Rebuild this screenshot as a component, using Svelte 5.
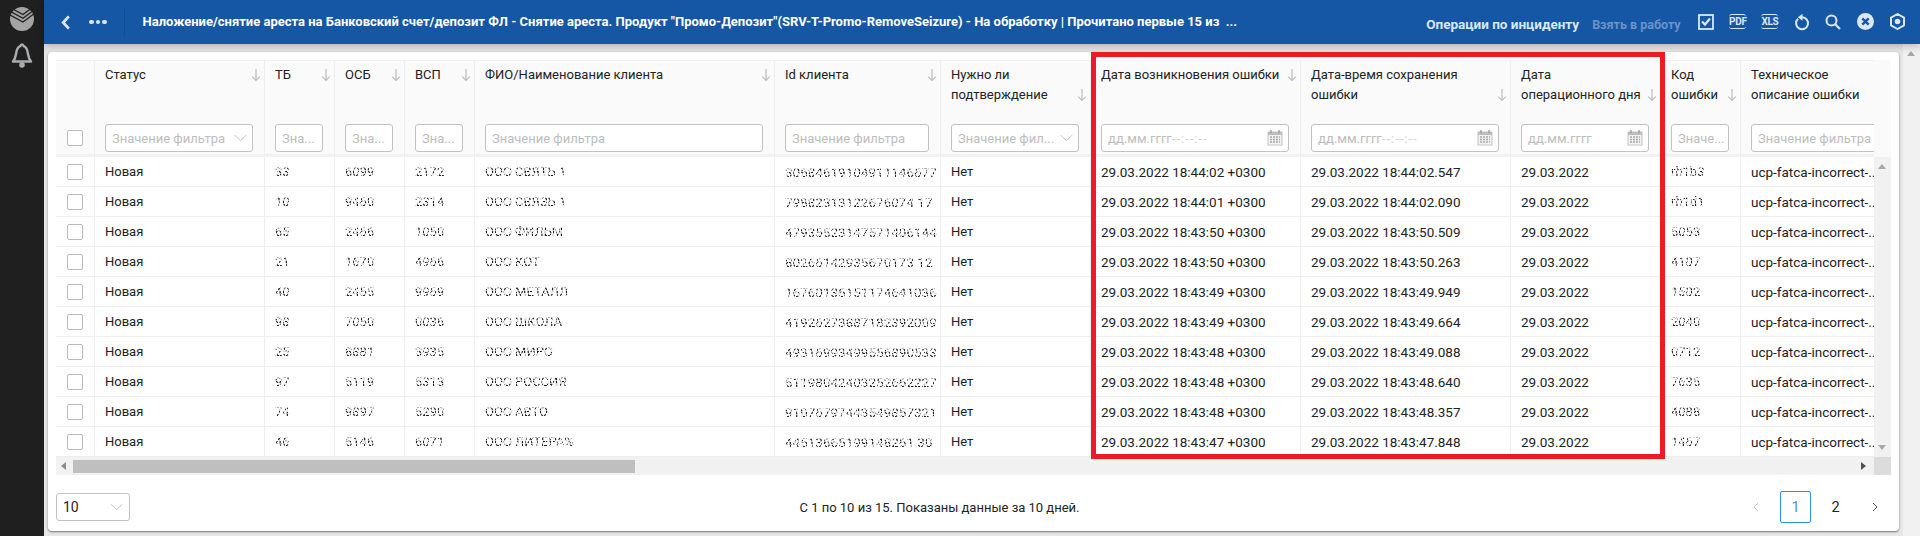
<script>
    const columns = [
        { lines: ['Статус'], width: 170, filter: 'select', text: 'Значение фильтра' },
        { lines: ['ТБ'], width: 70, filter: 'text', text: 'Зна...' },
        { lines: ['ОСБ'], width: 70, filter: 'text', text: 'Зна...' },
        { lines: ['ВСП'], width: 70, filter: 'text', text: 'Зна...' },
        { lines: ['ФИО/Наименование клиента'], width: 300, filter: 'text', text: 'Значение фильтра' },
        { lines: ['Id клиента'], width: 166, filter: 'text', text: 'Значение фильтра' },
        { lines: ['Нужно ли', 'подтверждение'], width: 150, filter: 'select', text: 'Значение фил...' },
        { lines: ['Дата возникновения ошибки'], width: 210, filter: 'date', text: 'дд.мм.гггг', time: '--:--:--' },
        { lines: ['Дата-время сохранения', 'ошибки'], width: 210, filter: 'date', text: 'дд.мм.гггг', time: '--:--:--' },
        { lines: ['Дата', 'операционного дня'], width: 150, filter: 'date', text: 'дд.мм.гггг' },
        { lines: ['Код', 'ошибки'], width: 80, filter: 'text', text: 'Значе...' },
        { lines: ['Техническое', 'описание ошибки'], width: 150, filter: 'text', text: 'Значение фильтра', noSort: true }
    ];

    const rows = [
        ['33', '6099', '2172', 'ООО СВЯТЬ 1', '30684619104911146677', '18:44:02', '18:44:02.547', 'rh1b3'],
        ['10', '9460', '2314', 'ООО СВЯЗЬ 1', '79882313122676074 17', '18:44:01', '18:44:02.090', 'rh1d1'],
        ['65', '2466', '1050', 'ООО ФИЛЬМ', '47935523147571406144', '18:43:50', '18:43:50.509', '5053'],
        ['21', '1670', '4966', 'ООО КОТ', '80266142935670173 12', '18:43:50', '18:43:50.263', '4107'],
        ['40', '2455', '9969', 'ООО МЕТАЛЛ', '16760136151174641036', '18:43:49', '18:43:49.949', '1502'],
        ['98', '7050', '0036', 'ООО ШКОЛА', '41926273887182392009', '18:43:49', '18:43:49.664', '2040'],
        ['25', '8881', '3935', 'ООО МИРО', '49316993499556890533', '18:43:48', '18:43:49.088', '0712'],
        ['97', '5119', '5313', 'ООО РОССИЯ', '51198042403252662227', '18:43:48', '18:43:48.640', '7635'],
        ['74', '9897', '5290', 'ООО АВТО', '91076797443549857321', '18:43:48', '18:43:48.357', '4088'],
        ['46', '5146', '6071', 'ООО ЛИТЕРА%', '44513665199148261 30', '18:43:47', '18:43:47.848', '1467']
    ];
</script>

<div class="page">
    <aside class="side">
        <svg class="logo" viewBox="0 0 24 24" width="24" height="24">
            <circle cx="12" cy="12" r="12" fill="#a3a3a3" />
            <path d="M-1 7.500 13 15 25 6M-1 3.700 13 11.200 25 2.200M-1 0 13 7.500 25-1.500" fill="none" stroke="#1f1f1f" stroke-width="1.300" />
        </svg>
        <svg class="bell" viewBox="0 0 24 26" width="24" height="26">
            <path d="M12 1.500c-1 0-1.500.8-1.700 1.700C7.500 4.200 6.500 7 6 11c-.4 3-1.300 5.300-3 7.500h18c-1.700-2.200-2.600-4.500-3-7.500-.5-4-1.500-6.800-4.300-7.800-.2-.9-.7-1.700-1.700-1.700z" fill="none" stroke="#a9adb0" stroke-width="2.400" stroke-linejoin="round" />
            <circle cx="12" cy="22" r="2.800" fill="#a9adb0" />
        </svg>
    </aside>

    <div class="main">
        <header class="top">
            <button class="back" aria-label="Назад">
                <svg viewBox="0 0 10 16" width="10" height="15"><path d="M8 1.500 2 8l6 6.500" fill="none" stroke="#dbe7f5" stroke-width="3" /></svg>
            </button>
            <div class="dots"><i></i><i></i><i></i></div>
            <div class="title">Наложение/снятие ареста на Банковский счет/депозит ФЛ - Снятие ареста. Продукт "Промо-Депозит"(SRV-T-Promo-RemoveSeizure) - На обработку | Прочитано первые 15 из &nbsp;...</div>
            <div class="actions">
                <span class="action">Операции по инциденту</span>
                <span class="action off">Взять в работу</span>
                <div class="tools">
                    <svg viewBox="0 0 16 16" width="16" height="16"><rect x="1" y="1" width="14" height="14" fill="none" stroke="#dbe7f5" stroke-width="1.800" /><path d="M4 7.500 7 10.500 12 4.500" fill="none" stroke="#dbe7f5" stroke-width="2.200" /></svg>
                    <div class="doc">PDF</div>
                    <div class="doc">XLS</div>
                    <svg viewBox="0 0 16 18" width="16" height="18"><path d="M4 5.800a6 6 0 1 0 4-1.600" fill="none" stroke="#dbe7f5" stroke-width="2" /><path d="M8.500.8v7L3.800 4.300z" fill="#dbe7f5" /></svg>
                    <svg viewBox="0 0 16 16" width="16" height="16"><circle cx="6.500" cy="6.500" r="5" fill="none" stroke="#dbe7f5" stroke-width="2" /><path d="m10 10 5 5" stroke="#dbe7f5" stroke-width="2.200" /></svg>
                    <svg viewBox="0 0 17 17" width="17" height="17"><circle cx="8.500" cy="8.500" r="8.500" fill="#dbe7f5" /><path d="m5.300 5.300 6.400 6.400m0-6.400-6.400 6.400" stroke="#1557a5" stroke-width="2.400" /></svg>
                    <svg viewBox="0 0 17 17" width="17" height="17"><path d="M8.500 1 15 4.700v7.600L8.500 16 2 12.300V4.700z" fill="none" stroke="#dbe7f5" stroke-width="2" stroke-linejoin="round" /><circle cx="8.500" cy="8.500" r="2.800" fill="#dbe7f5" /></svg>
                </div>
            </div>
        </header>

        <div class="body">
            <div class="card">
                <div class="grid">
                    <div class="clip">
                        <table>
                            <colgroup>
                                <col style="width: 39px" />
                                {#each columns as col}
                                    <col style="width: {col.width}px" />
                                {/each}
                            </colgroup>
                            <thead>
                                <tr>
                                    <th class="check-head"><span class="check"></span></th>
                                    {#each columns as col}
                                        <th>
                                            <div class="head">
                                                <div class="name">
                                                    {#each col.lines as line}
                                                        <div>{line}</div>
                                                    {/each}
                                                </div>
                                                {#if !col.noSort}
                                                    <svg class="sort" viewBox="0 0 10 14" width="10" height="14"><path d="M5 1v11.500M1.200 8.700 5 12.500l3.800-3.800" fill="none" stroke="#bdbdbd" stroke-width="1.200" /></svg>
                                                {/if}
                                            </div>
                                            <div class="filter">
                                                <span class="hint">{col.text}{#if col.time}<span class="time"> {col.time}</span>{/if}</span>
                                                {#if col.filter === 'select'}
                                                    <svg class="chev" viewBox="0 0 14 8" width="13" height="8"><path d="m1 1 6 6 6-6" fill="none" stroke="#bdbdbd" /></svg>
                                                {:else if col.filter === 'date'}
                                                    <svg class="cal" viewBox="0 0 16 16" width="16" height="16">
                                                        <rect x="1" y="2" width="14" height="13" fill="#f2f2f2" stroke="#c4c4c4" />
                                                        <rect x="1" y="2" width="14" height="3" fill="#bdbdbd" />
                                                        <path d="M4 0v3M12 0v3" stroke="#9f9f9f" stroke-width="1.500" />
                                                        <path d="M3 7h10M3 9.500h10M3 12h10" stroke="#a8a8a8" stroke-dasharray="2 1" stroke-width="1.300" />
                                                    </svg>
                                                {/if}
                                            </div>
                                        </th>
                                    {/each}
                                </tr>
                            </thead>
                            <tbody>
                                {#each rows as row}
                                    <tr>
                                        <td class="check-cell"><span class="check"></span></td>
                                        <td>Новая</td>
                                        <td><span class="masked">{row[0]}</span></td>
                                        <td><span class="masked">{row[1]}</span></td>
                                        <td><span class="masked">{row[2]}</span></td>
                                        <td><span class="masked">{row[3]}</span></td>
                                        <td><span class="masked id">{row[4]}</span></td>
                                        <td>Нет</td>
                                        <td class="date">29.03.2022 {row[5]} +0300</td>
                                        <td class="date">29.03.2022 {row[6]}</td>
                                        <td class="date">29.03.2022</td>
                                        <td><span class="masked">{row[7]}</span></td>
                                        <td class="date">ucp-fatca-incorrect-..</td>
                                    </tr>
                                {/each}
                            </tbody>
                        </table>
                    </div>
                    <div class="vbar">
                        <i class="up"></i>
                        <i class="down"></i>
                    </div>
                </div>
                <div class="hbar">
                    <i class="left"></i>
                    <div class="thumb"></div>
                    <i class="right"></i>
                    <div class="corner"></div>
                </div>

                <footer class="foot">
                    <div class="size">
                        <span>10</span>
                        <svg viewBox="0 0 14 8" width="13" height="8"><path d="m1 1 6 6 6-6" fill="none" stroke="#bdbdbd" /></svg>
                    </div>
                    <div class="info">С 1 по 10 из 15. Показаны данные за 10 дней.</div>
                    <nav class="pager">
                        <svg viewBox="0 0 6 10" width="6" height="10"><path d="M5 1 1 5l4 4" fill="none" stroke="#c9c9c9" /></svg>
                        <span class="num active">1</span>
                        <span class="num">2</span>
                        <svg viewBox="0 0 6 10" width="6" height="10"><path d="m1 1 4 4-4 4" fill="none" stroke="#555" /></svg>
                    </nav>
                </footer>

                <div class="mark"></div>
            </div>
            <div class="pagebar"><i class="up"></i></div>
        </div>
    </div>
</div>

<style>
    :global(body) {
        margin: 0;
        font-family: Roboto, "Noto Sans", sans-serif;
    }

    .page {
        display: flex;
        height: 536px;
        overflow: hidden;
        color: #222;
        font-size: 13px;
    }

    .side {
        width: 44px;
        flex: none;
        background: #1f1f1f;
        display: flex;
        flex-direction: column;
        align-items: center;
        padding-top: 7px;
        box-sizing: border-box;
    }

    .bell {
        margin-top: 12px;
    }

    .main {
        flex: 1;
        min-width: 0;
        display: flex;
        flex-direction: column;
    }

    .top {
        height: 44px;
        flex: none;
        background: #1557a5;
        display: flex;
        align-items: center;
        color: #fff;
        box-shadow: 0 2px 8px rgba(0, 0, 0, 0.25);
        position: relative;
        z-index: 1;
    }

    .back {
        background: none;
        border: 0;
        padding: 0;
        margin-left: 17px;
        display: flex;
    }

    .dots {
        display: flex;
        gap: 2px;
        margin-left: 18px;
        margin-right: 17px;
    }

    .dots i {
        width: 4.500px;
        height: 4.500px;
        border-radius: 50%;
        background: #dbe7f5;
    }

    .title {
        border-left: 1px solid #11508f;
        padding-left: 18px;
        height: 30px;
        line-height: 30px;
        font-weight: 700;
        font-size: 13px;
        white-space: nowrap;
    }

    .actions {
        margin-left: auto;
        display: flex;
        align-items: center;
        font-weight: 700;
        font-size: 13px;
        padding-top: 4px;
    }

    .action {
        color: #dbe7f5;
        margin-right: 13px;
        font-size: 13.500px;
    }

    .action.off {
        color: #6c93c5;
        font-size: 12.500px;
        margin-right: 15px;
    }

    .tools {
        display: flex;
        align-items: center;
        gap: 15.400px;
        margin: -5px 14px 0 2px;
    }

    .doc {
        font-size: 10px;
        font-weight: 700;
        color: #dbe7f5;
        border-top: 1.500px solid #dbe7f5;
        border-bottom: 1.500px solid #dbe7f5;
        border-radius: 3px;
        line-height: 11px;
        padding: 1px 0;
        width: 17px;
        text-align: center;
        letter-spacing: -0.300px;
    }

    .body {
        flex: 1;
        min-height: 0;
        display: flex;
        background: #e6e6e6;
    }

    .card {
        position: relative;
        flex: 1;
        min-width: 0;
        margin: 8px 4px 5px 4px;
        padding: 8px 8px 0;
        background: #fff;
        border-radius: 4px;
        box-shadow: 0 1px 2px rgba(0, 0, 0, 0.5);
    }

    .pagebar {
        width: 17px;
        flex: none;
        background: #f1f1f1;
        position: relative;
    }

    .pagebar .up {
        position: absolute;
        top: 7px;
        left: 4px;
    }

    .grid {
        display: flex;
        height: 397px;
        background: #fafafa;
    }

    .clip {
        width: 1818px;
        flex: none;
        overflow: hidden;
    }

    table {
        border-collapse: separate;
        border-spacing: 0;
        table-layout: fixed;
        width: 1835px;
    }

    th {
        height: 97px;
        box-sizing: border-box;
        padding: 4px 11px 0 10px;
        background: #fafafa;
        border-top: 1px solid #f1f1f1;
        border-right: 1px solid #eeeeee;
        border-bottom: 3px solid #f1f1f1;
        vertical-align: top;
        font-weight: 400;
        text-align: left;
    }

    .check-head {
        padding: 69px 0 0 11px;
    }

    .head {
        display: flex;
        justify-content: space-between;
        align-items: flex-end;
        height: 59px;
        margin-right: -8px;
    }

    .name {
        line-height: 20px;
        align-self: flex-start;
        display: flex;
        flex-direction: column;
        white-space: nowrap;
    }

    .head:has(.name > :only-child) .sort {
        align-self: flex-start;
        margin-top: 3px;
    }

    .head:has(.name > :nth-child(2)) .sort {
        align-self: flex-start;
        margin-top: 23px;
    }

    .filter {
        height: 28px;
        box-sizing: border-box;
        border: 1px solid #c2c2c2;
        border-radius: 3px;
        background: #fff;
        padding: 0 5px 0 6px;
        display: flex;
        align-items: center;
        justify-content: space-between;
        color: #bdbdbd;
        white-space: nowrap;
        overflow: hidden;
    }

    .time {
        color: #d4d4d4;
        letter-spacing: 1px;
    }

    .check {
        display: block;
        width: 16px;
        height: 16px;
        box-sizing: border-box;
        border: 1px solid #bbbbbb;
        border-radius: 2px;
        background: #fff;
    }

    td {
        height: 30px;
        box-sizing: border-box;
        padding: 0 0 0 10px;
        background: #fff;
        border-right: 1px solid #eeeeee;
        border-bottom: 1px solid #eeeeee;
        white-space: nowrap;
        overflow: hidden;
    }

    td.date,
    .id {
        font-size: 13.500px;
    }

    .check-cell {
        padding-left: 11px;
    }

    .masked {
        display: inline-block;
        -webkit-mask-image: repeating-linear-gradient(70deg, #000 0 2px, rgba(0, 0, 0, 0.12) 2px 3px), repeating-linear-gradient(0deg, #000 0 2px, rgba(0, 0, 0, 0.35) 2px 3px);
        mask-image: repeating-linear-gradient(70deg, #000 0 2px, rgba(0, 0, 0, 0.12) 2px 3px), repeating-linear-gradient(0deg, #000 0 2px, rgba(0, 0, 0, 0.35) 2px 3px);
        -webkit-mask-composite: source-in;
        mask-composite: intersect;
    }

    .vbar {
        width: 17px;
        flex: none;
        margin-top: 97px;
        background: #f1f1f1;
        position: relative;
    }

    .up,
    .down,
    .left,
    .right {
        display: block;
        width: 0;
        height: 0;
        border: 4.500px solid transparent;
    }

    .up {
        border-top: 0;
        border-bottom: 5px solid #a8a8a8;
    }

    .down {
        border-bottom: 0;
        border-top: 5px solid #a8a8a8;
    }

    .vbar .up {
        position: absolute;
        top: 7px;
        left: 4px;
    }

    .vbar .down {
        position: absolute;
        bottom: 7px;
        left: 4px;
    }

    .hbar {
        height: 18px;
        background: #f1f1f1;
        display: flex;
        align-items: center;
    }

    .left {
        border-left: 0;
        border-right: 5px solid #8c8c8c;
        margin-left: 5px;
    }

    .right {
        border-right: 0;
        border-left: 5px solid #505050;
        margin-left: 1226px;
    }

    .thumb {
        width: 562px;
        height: 13px;
        background: #bfbfbf;
        margin-left: 7px;
    }

    .corner {
        width: 17px;
        height: 18px;
        background: #dcdcdc;
        margin-left: auto;
    }

    .foot {
        display: flex;
        align-items: center;
        justify-content: space-between;
        height: 48px;
        padding-top: 16px;
        box-sizing: border-box;
        position: relative;
    }

    .size {
        width: 74px;
        height: 28px;
        box-sizing: border-box;
        border: 1px solid #c2c2c2;
        border-radius: 3px;
        padding: 0 6px;
        display: flex;
        align-items: center;
        justify-content: space-between;
        font-size: 14px;
    }

    .info {
        flex: 1;
        text-align: center;
        font-size: 13px;
        padding-right: 4px;
    }

    .pager {
        display: flex;
        align-items: center;
        padding-right: 13px;
    }

    .pager svg:first-child {
        margin-right: 21px;
    }

    .pager svg:last-child {
        margin-left: 21px;
    }

    .num {
        width: 31px;
        height: 32px;
        box-sizing: border-box;
        display: flex;
        align-items: center;
        justify-content: center;
        font-size: 14.500px;
        border: 1px solid transparent;
        border-radius: 2px;
        margin-right: 9px;
    }

    .num:last-of-type {
        margin-right: 0;
    }

    .num.active {
        border-color: #2f8ff0;
        color: #4a90d9;
    }

    /* red highlight around the three date columns */
    .mark {
        position: absolute;
        left: 1043px;
        top: 0;
        width: 574px;
        height: 407px;
        box-sizing: border-box;
        border: 5px solid #ed1c24;
        pointer-events: none;
    }
</style>
